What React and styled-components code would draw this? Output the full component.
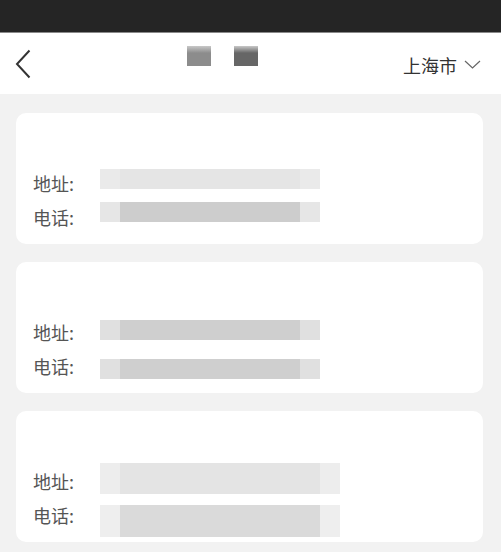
import React from "react";
import styled, { createGlobalStyle } from "styled-components";

const GlobalStyle = createGlobalStyle`
  html, body {
    margin: 0;
    padding: 0;
    background: #f2f2f2;
  }
  body {
    font-family: "Noto Sans CJK SC", "Liberation Sans", sans-serif;
  }
`;

// blurred placeholders for the hidden address / phone values
const stores = [
  {
    addr: { w: 220, h: 20, dy: -4, c: "#e5e5e5", tone: "#eaeaea" },
    tel: { w: 220, h: 20, dy: -5, c: "#cdcdcd", tone: "#e6e6e6" },
  },
  {
    addr: { w: 220, h: 20, dy: -2, c: "#cfcfcf", tone: "#e0e0e0" },
    tel: { w: 220, h: 20, dy: 3, c: "#cfcfcf", tone: "#e0e0e0" },
  },
  {
    addr: { w: 240, h: 31, dy: -3, c: "#e4e4e4", tone: "#ededed" },
    tel: { w: 240, h: 32, dy: 6, c: "#dadada", tone: "#eeeeee" },
  },
];

const App = () => {
  return (
    <Page>
      <GlobalStyle />
      <StatusBar />
      <NavBar>
        <Back>
          <svg width="16" height="30" viewBox="0 0 16 30">
            <path d="M14.5 1.5 L2 15 L14.5 28.5" fill="none" stroke="#333" strokeWidth="2" />
          </svg>
        </Back>
        <Title>
          <TitleBlock tone="#8c8c8c" />
          <TitleBlock tone="#666666" />
        </Title>
        <City>
          上海市
          <svg width="17" height="9" viewBox="0 0 17 9">
            <path d="M1 1 L8.5 8 L16 1" fill="none" stroke="#666" strokeWidth="1.2" />
          </svg>
        </City>
      </NavBar>
      <List>
        {stores.map((s, i) => (
          <Card key={i}>
            <CardHead />
            <Row>
              <Label>地址:</Label>
              <Blur style={{ width: s.addr.w, height: s.addr.h }} dy={s.addr.dy} c={s.addr.c} tone={s.addr.tone} />
            </Row>
            <Row>
              <Label>电话:</Label>
              <Blur style={{ width: s.tel.w, height: s.tel.h }} dy={s.tel.dy} c={s.tel.c} tone={s.tel.tone} />
            </Row>
          </Card>
        ))}
      </List>
    </Page>
  );
};
export default App;

const Page = styled.div`
  width: 501px;
  min-height: 552px;
  background: #f2f2f2;
`;

const StatusBar = styled.div`
  height: 32px;
  background: #252525;
  border-bottom: 1px solid #8a8a8a;
`;

const NavBar = styled.div`
  height: 61px;
  background: #ffffff;
  display: flex;
  align-items: center;
  justify-content: space-between;
  padding: 0 20px 0 15px;
  position: relative;
`;

const Back = styled.div`
  display: flex;
  align-items: center;
  width: 40px;
`;

const Title = styled.div`
  position: absolute;
  left: 187px;
  top: 13px;
  display: flex;
  gap: 23px;
`;

const TitleBlock = styled.div`
  width: 24px;
  height: 20px;
  background: linear-gradient(#c8c8c8 0%, ${(p) => p.tone} 35%, ${(p) => p.tone} 100%);
`;

const City = styled.div`
  display: flex;
  align-items: center;
  gap: 7px;
  font-size: 18px;
  color: #333;
  margin-top: 2px;
`;

const List = styled.div`
  display: flex;
  flex-direction: column;
  gap: 18px;
  padding: 19px 18px 0 16px;
`;

const Card = styled.div`
  background: #ffffff;
  border-radius: 10px;
  height: 131px;
  padding: 0 17px;
  box-sizing: border-box;
  display: flex;
  flex-direction: column;
`;

const CardHead = styled.div`
  height: 53px;
`;

const Row = styled.div`
  height: 34px;
  display: flex;
  align-items: center;
`;

const Label = styled.span`
  width: 67px;
  font-size: 18px;
  color: #555;
  flex-shrink: 0;
`;

const Blur = styled.span`
  display: block;
  flex-shrink: 0;
  margin-top: ${(p) => (p.dy > 0 ? p.dy * 2 : 0)}px;
  margin-bottom: ${(p) => (p.dy < 0 ? -p.dy * 2 : 0)}px;
  background: linear-gradient(
    90deg,
    ${(p) => p.tone} 0,
    ${(p) => p.tone} 20px,
    ${(p) => p.c} 20px,
    ${(p) => p.c} calc(100% - 20px),
    ${(p) => p.tone} calc(100% - 20px)
  );
`;
